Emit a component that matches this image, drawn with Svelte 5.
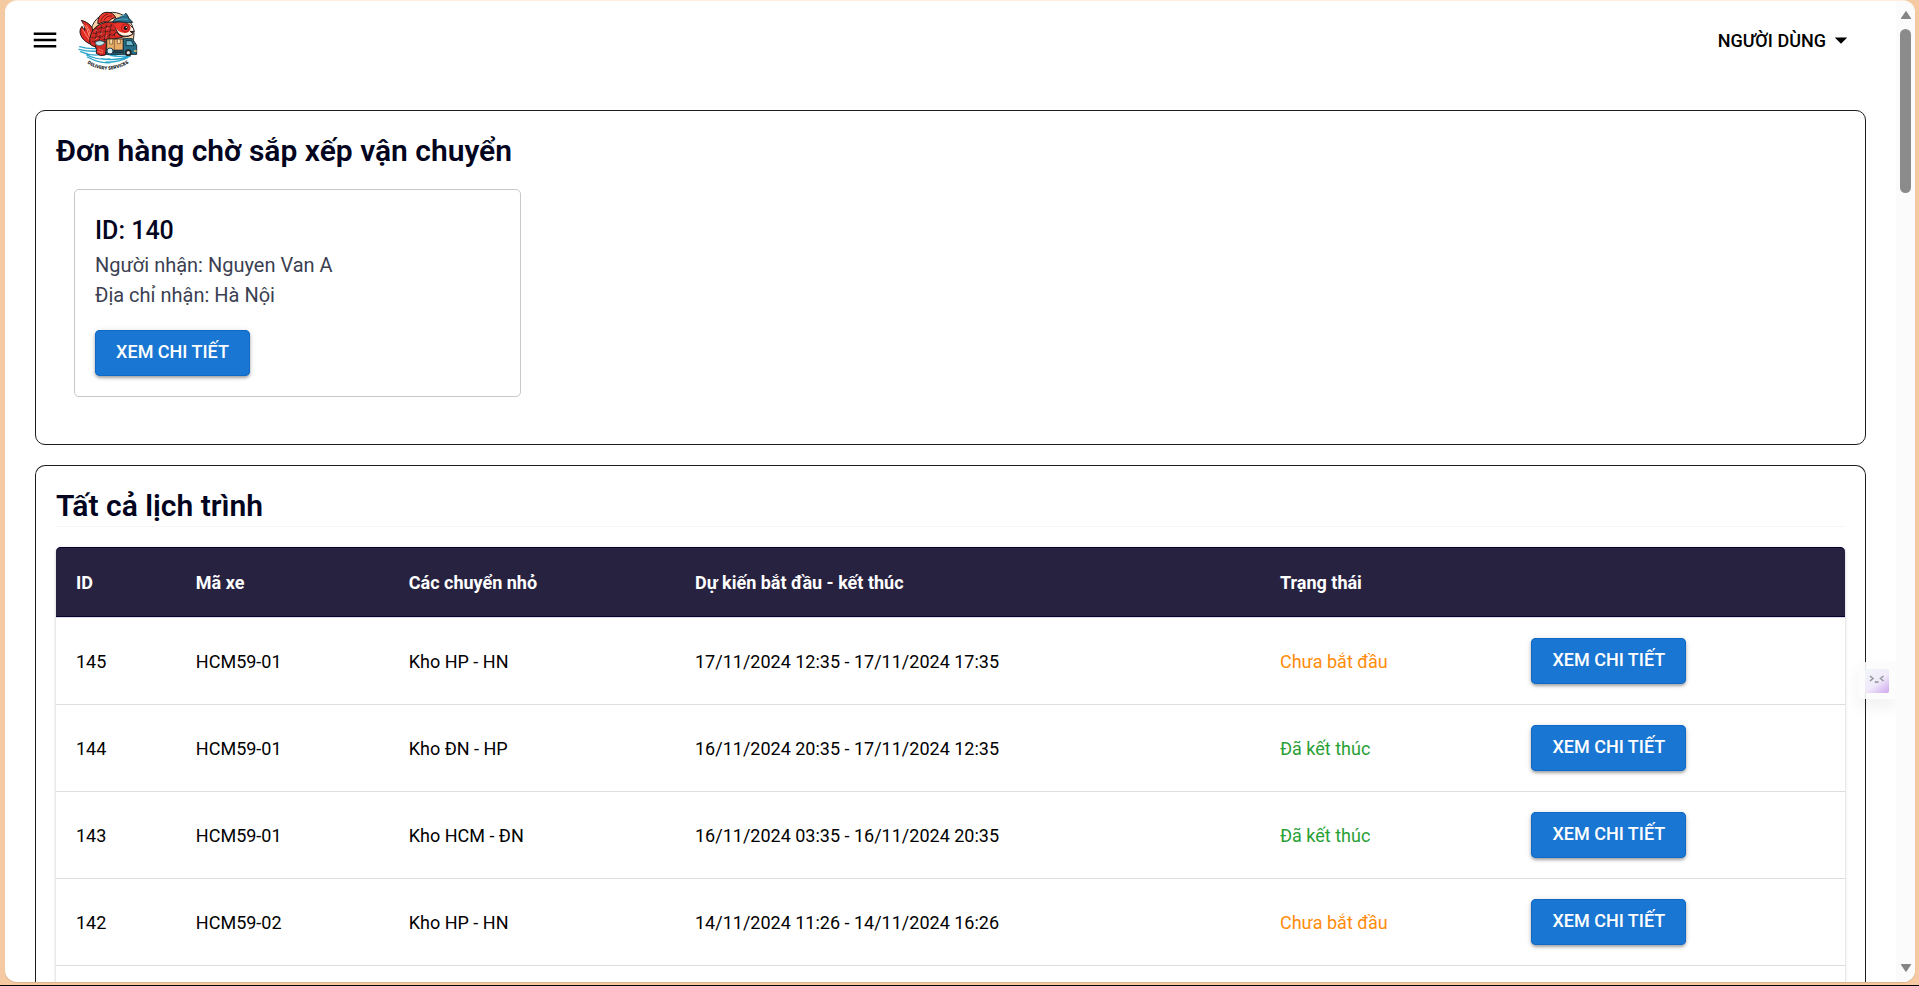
<script>
  const orders = [{ id: 140, receiver: 'Nguyen Van A', address: 'Hà Nội' }];

  const columns = [
    { title: 'ID', width: 6.7 },
    { title: 'Mã xe', width: 11.9 },
    { title: 'Các chuyển nhỏ', width: 16 },
    { title: 'Dự kiến bắt đầu - kết thúc', width: 32.7 },
    { title: 'Trạng thái', width: 14.05 },
    { title: '', width: 18.65 }
  ];

  const schedules = [
    { id: 145, truck: 'HCM59-01', trip: 'Kho HP - HN', time: '17/11/2024 12:35 - 17/11/2024 17:35', done: false },
    { id: 144, truck: 'HCM59-01', trip: 'Kho ĐN - HP', time: '16/11/2024 20:35 - 17/11/2024 12:35', done: true },
    { id: 143, truck: 'HCM59-01', trip: 'Kho HCM - ĐN', time: '16/11/2024 03:35 - 16/11/2024 20:35', done: true },
    { id: 142, truck: 'HCM59-02', trip: 'Kho HP - HN', time: '14/11/2024 11:26 - 14/11/2024 16:26', done: false }
  ];
</script>

<div class="desktop">
  <div class="window">
    <div class="page">
      <header>
        <button class="menu" aria-label="Menu">
          <svg viewBox="0 0 24 24" width="30" height="30"><path d="M3 18h18v-2H3zm0-5h18v-2H3zm0-7v2h18V6z" /></svg>
        </button>
        <a class="logo" href="#home" aria-label="Home">
          <svg viewBox="231 30 183 183" width="61" height="61">
            <circle cx="337" cy="102" r="65" fill="#fbd3a6" stroke="#26282c" stroke-width="3" />
            <path d="M240 140q38 5 72 2 34 30 98 24-20 16-56 23-38 3-74-19l22 2q-25-9-44-22l24 4q-14-6-24-14z" fill="#fff" />
            <path d="M235 150L274 130L290 170L400 172L386 200H270z" fill="#fff" />
            <path d="M239 140q26 8 56 5M237 148q34 9 68 4M242 155q30 14 62 9M260 165q34 16 70 12M262 171q36 20 70 17M305 176q40 8 86-8M318 186q36 2 66-14M330 166q28 6 60 0M302 158q26 10 52 5" fill="none" stroke="#29a4ca" stroke-width="4" stroke-linecap="round" />
            <path d="M270 132C243 120 232 94 246 79c4 9 8 9 8 13 1-13-3-20-10-31 22 6 37 19 35 40-1 13 1 18 4 24z" fill="#e02a23" stroke="#26191c" stroke-width="3" />
            <path d="M248 70q18 19 20 40M248 88q9 17 22 34M259 76q14 18 12 35" fill="none" stroke="#ff8f78" stroke-width="3" />
            <path d="M270 132c-4-24 8-48 28-58 18-10 38-8 54-8l26 10c20 0 24 16 20 26-12 10-26 6-40 12-22 2-36 8-52 14-10 14-24 16-36 4z" fill="#d42a24" stroke="#26191c" stroke-width="3" />
            <path d="M294 72c-3-18 10-36 27-35 14 0 24 8 26 17-12-2-18 10-25 12-10-3-18 2-28 6z" fill="#ee3a2b" stroke="#26191c" stroke-width="3" />
            <path d="M302 64q6-18 22-22M312 61q8-15 24-13" fill="none" stroke="#7d1519" stroke-width="3" />
            <path d="M285 87q10 5 18-5 8 7 18-3 8 5 16-4M279 99q10 6 18-4 10 7 18-2 10 6 20-3 6 4 12-1M275 112q10 6 18-3 10 7 18-2 10 6 20-3 7 4 14-2M276 124q10 6 18-4 10 6 18-2 10 5 20-5M291 82l-6 48M305 76l-8 54M319 74l-6 48M334 72l-7 44" fill="none" stroke="#3a1a1e" stroke-width="2" />
            <path d="M286 94l5-6M301 104l5-7M286 119l5-6M319 89l5-7M316 112l5-7" stroke="#ff7c66" stroke-width="3" />
            <path d="M345 72q25-10 46 4 13 10 12 19l-13-1 9 7q-10 10-31 7-20-6-24-36z" fill="#fff3df" stroke="#26191c" stroke-width="3" />
            <path d="M341 72q18-8 32-3 18 2 19 15-2 15-19 15-22-1-32-27z" fill="#ee342a" />
            <circle cx="376" cy="84" r="12" fill="#f0302a" stroke="#8c171a" stroke-width="2" />
            <circle cx="377" cy="84" r="6" fill="#17171b" />
            <circle cx="379" cy="82" r="2" fill="#fff" />
            <path d="M338 67q3-12 22-14l18-13q6 7 8 14l12 13q-14 3-27 0-18-4-33 0z" fill="#276d87" stroke="#172833" stroke-width="3" />
            <path d="M347 60q17-5 37-2M359 50l18-6" fill="none" stroke="#52a9be" stroke-width="3" />
            <path d="M344 108q-4-8 6-12 6 12 18 13" fill="#ee342a" stroke="#26191c" stroke-width="3" />
            <path d="M286 136q15-18 34-8l-4 37q-15 6-27-5 2-12-3-24z" fill="#d42a24" stroke="#26191c" stroke-width="3" />
            <path d="M286 127q14-10 29 1-13 14-27 6z" fill="#bce7ef" stroke="#254553" stroke-width="2" />
            <path d="M295 147l15 6M292 155l17 3" stroke="#ff7660" stroke-width="3" />
            <path d="M320 117h50v34h-50z" fill="#e9ad68" stroke="#292321" stroke-width="3" />
            <path d="M343 117v34M329 119v13h9v-13M352 119v12h9v-12" fill="#ffdba6" stroke="#6a4a2c" stroke-width="2" />
            <path d="M370 116h27l13 20v27h-91v-12h51z" fill="#256f88" stroke="#18303c" stroke-width="3" />
            <path d="M378 122h16l8 15h-24z" fill="#69b7ca" stroke="#173642" stroke-width="3" />
            <path d="M318 157h55" stroke="#1e3541" stroke-width="6" />
            <circle cx="330" cy="153" r="9" fill="#d8edf3" stroke="#214557" stroke-width="3" />
            <circle cx="385" cy="158" r="10" fill="#222" />
            <circle cx="385" cy="158" r="5" fill="#d9e6e8" />
            <path d="M402 153h8" stroke="#f6cc68" stroke-width="4" />
            <path id="arc" d="M262 190Q322 229 388 188" fill="none" />
            <text class="logo-text"><textPath href="#arc">DELIVERY SERVICES</textPath></text>
          </svg>
        </a>
        <button class="user">
          NGƯỜI DÙNG
          <svg viewBox="0 0 24 24" width="30" height="30"><path d="m7 10 5 5 5-5z" /></svg>
        </button>
      </header>

      <main>
        <section class="pending">
          <h1>Đơn hàng chờ sắp xếp vận chuyển</h1>
          <div class="cards">
            {#each orders as order}
              <article>
                <h2>ID: {order.id}</h2>
                <p>Người nhận: {order.receiver}</p>
                <p>Địa chỉ nhận: {order.address}</p>
                <button class="detail">XEM CHI TIẾT</button>
              </article>
            {/each}
          </div>
        </section>

        <section class="schedules">
          <h1>Tất cả lịch trình</h1>
          <div class="table-wrap">
            <table>
              <colgroup>
                {#each columns as column}<col style="width: {column.width}%" />{/each}
              </colgroup>
              <thead>
                <tr>{#each columns as column}<th>{column.title}</th>{/each}</tr>
              </thead>
              <tbody>
                {#each schedules as row}
                  <tr>
                    <td>{row.id}</td>
                    <td>{row.truck}</td>
                    <td>{row.trip}</td>
                    <td>{row.time}</td>
                    <td class={row.done ? 'done' : 'waiting'}>{row.done ? 'Đã kết thúc' : 'Chưa bắt đầu'}</td>
                    <td><button class="detail">XEM CHI TIẾT</button></td>
                  </tr>
                {/each}
              </tbody>
            </table>
          </div>
        </section>
      </main>
    </div>

    <div class="scrollbar">
      <svg viewBox="0 0 12 10" width="12" height="10"><path d="M6 1.5 10.7 8.5H1.3z" /></svg>
      <div class="thumb"></div>
      <svg class="down" viewBox="0 0 12 10" width="12" height="10"><path d="M6 8.5 1.3 1.5h9.4z" /></svg>
    </div>

    <button class="assistant" aria-label="Assistant">
      <svg viewBox="0 0 24 24" width="24" height="24">
        <defs>
          <linearGradient id="lilac" x1="0.2" y1="0" x2="1" y2="1">
            <stop offset="0" stop-color="#f1f4f9" />
            <stop offset="0.5" stop-color="#f0eafa" />
            <stop offset="1" stop-color="#cfa6ee" />
          </linearGradient>
        </defs>
        <rect width="24" height="24" rx="2" fill="url(#lilac)" />
        <path d="M5 7l3 2.5L5 12M18.5 7l-3 2.5 3 2.5M10 12.5q2 1.5 3.5 0" fill="none" stroke="#96969f" stroke-width="1.6" />
      </svg>
    </button>
  </div>
</div>

<style>
  :global(body) {
    margin: 0;
    background: #f5c9a2;
  }

  .desktop {
    box-sizing: border-box;
    height: 100vh;
    padding: 1px 4px 3px 5px;
    border-bottom: 1px solid #000;
    background: #f5c9a2;
    font-family: Roboto, "Noto Sans", sans-serif;
    color: #000;
  }

  .window {
    position: relative;
    display: flex;
    height: 100%;
    overflow: hidden;
    border-radius: 12px;
    background: #fff;
    box-shadow: 0 -1px 0 #fdeee0, 0 1px 1px #dcb18b;
  }

  .page {
    display: flex;
    flex: 1;
    flex-direction: column;
    min-width: 0;
  }

  button {
    border: 0;
    background: none;
    font: inherit;
    color: inherit;
    cursor: pointer;
  }

  svg {
    display: block;
  }

  header {
    display: flex;
    flex: none;
    align-items: center;
    height: 78px;
    padding: 0 40px 0 25px;
  }

  .menu {
    padding: 0;
  }

  .logo {
    margin-left: 17px;
  }

  .logo-text {
    font-size: 14px;
    font-weight: 900;
    fill: #15171a;
  }

  .user {
    display: flex;
    align-items: center;
    margin-left: auto;
    padding: 0;
    font-size: 18px;
    font-weight: 500;
  }

  main {
    display: flex;
    flex: 1;
    flex-direction: column;
    gap: 20px;
    min-height: 0;
    padding: 31px 30px 0;
  }

  section {
    box-sizing: border-box;
    padding: 20px;
    border: 1px solid #1c1c1c;
    border-radius: 10px;
  }

  .pending {
    flex: none;
    padding-bottom: 47px;
  }

  .schedules {
    display: flex;
    flex: 1;
    flex-direction: column;
    padding-bottom: 0;
    border-bottom: 0;
    border-radius: 10px 10px 0 0;
  }

  h1 {
    margin: 0;
    font-size: 30px;
    font-weight: 600;
    line-height: 40px;
    color: #020420;
  }

  .schedules h1 {
    margin-bottom: 20px;
    border-bottom: 1px solid #f5f5f5;
  }

  .cards {
    display: grid;
    grid-template-columns: repeat(4, 1fr);
    margin: 18px -18px 0 18px;
  }

  article {
    box-sizing: border-box;
    padding: 20px;
    border: 1px solid #c8c8c8;
    border-radius: 5px;
  }

  h2 {
    margin: 0;
    padding-top: 2px;
    font-size: 25px;
    font-weight: 500;
    line-height: 38px;
    color: #020420;
  }

  p {
    margin: 0;
    font-size: 20px;
    line-height: 30px;
    color: #3b3f51;
  }

  .detail {
    display: block;
    min-width: 155px;
    height: 46px;
    padding: 0 20px 4px;
    border-radius: 5px;
    background: #1976d2;
    box-shadow: inset 0 0 0 1px #0f69c9, 0 2px 3px rgba(0, 0, 0, 0.3), 0 1px 6px rgba(0, 0, 0, 0.12);
    font-size: 18px;
    font-weight: 500;
    color: #fff;
    white-space: nowrap;
  }

  article .detail {
    margin-top: 20px;
  }

  .table-wrap {
    flex: 1;
    border-radius: 5px 5px 0 0;
    box-shadow: 0 1px 3px rgba(0, 0, 0, 0.25);
  }

  table {
    width: 100%;
    border-collapse: separate;
    border-spacing: 0;
    table-layout: fixed;
    font-size: 18px;
  }

  th,
  td {
    box-sizing: border-box;
    padding: 0 20px;
    text-align: left;
  }

  th {
    height: 71px;
    border-bottom: 1px solid #dcdce6;
    background: #282241;
    background-clip: padding-box;
    box-shadow: inset 0 1px #06042f, inset 0 -1px #06042f;
    font-weight: 700;
    color: #fff;
  }

  th:first-child {
    border-top-left-radius: 5px;
  }

  th:last-child {
    border-top-right-radius: 5px;
  }

  td {
    height: 87px;
    border-bottom: 1px solid #dedede;
  }

  .waiting {
    color: #ff8c0a;
  }

  .done {
    color: #28a035;
  }

  .scrollbar {
    display: flex;
    flex: none;
    flex-direction: column;
    align-items: center;
    width: 19px;
    padding: 9px 0;
    box-sizing: border-box;
    background: #fbfbfb;
    fill: #858585;
  }

  .scrollbar svg path {
    stroke: #858585;
    stroke-linejoin: round;
  }

  .thumb {
    width: 11px;
    height: 17%;
    margin-top: 9px;
    border-radius: 6px;
    background: #8b8b8b;
  }

  .down {
    margin-top: auto;
  }

  .assistant {
    position: absolute;
    top: 661px;
    right: 19px;
    padding: 7px 7px 6px;
    border-radius: 5px 0 0 5px;
    background: rgba(252, 252, 252, 0.9);
    box-shadow: 0 8px 16px rgba(0, 0, 0, 0.06);
    clip-path: inset(-10px 0 -30px -20px);
  }
</style>
